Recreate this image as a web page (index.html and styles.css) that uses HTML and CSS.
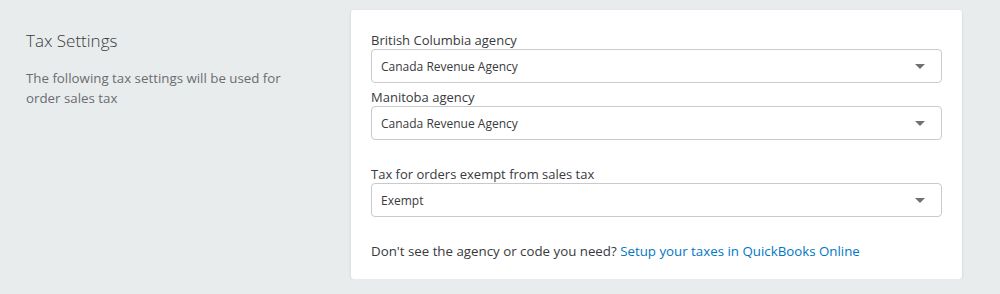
FILE: index.html
```html
<!DOCTYPE html>
<html lang="en">
<head>
<meta charset="utf-8">
<title>Tax Settings</title>
<link rel="stylesheet" href="styles.css">
</head>
<body>
<main class="page">
  <section class="intro">
    <h2 class="intro-title">Tax Settings</h2>
    <p class="intro-desc">The following tax settings will be used for order sales tax</p>
  </section>
  <section class="card">
    <div class="field">
      <label class="field-label">British Columbia agency</label>
      <div class="select"><span class="select-value">Canada Revenue Agency</span><span class="caret"></span></div>
    </div>
    <div class="field">
      <label class="field-label">Manitoba agency</label>
      <div class="select"><span class="select-value">Canada Revenue Agency</span><span class="caret"></span></div>
    </div>
    <div class="field field-spaced">
      <label class="field-label">Tax for orders exempt from sales tax</label>
      <div class="select"><span class="select-value">Exempt</span><span class="caret"></span></div>
    </div>
    <p class="help">Don't see the agency or code you need? <a class="help-link" href="#">Setup your taxes in QuickBooks Online</a></p>
  </section>
</main>
</body>
</html>
```

FILE: styles.css
```css
html, body {
  margin: 0;
  padding: 0;
  background: #e9eced;
}
body {
  font-family: "Open Sans", "Noto Sans", sans-serif;
  color: #393a3d;
}
.page {
  display: flex;
  align-items: flex-start;
  padding: 10px 0 0 26px;
}
.intro {
  width: 275px;
  flex: none;
  padding-top: 20px;
}
.intro-title {
  margin: 0;
  font-size: 17px;
  font-weight: 300;
  line-height: 22px;
  color: #393a3d;
}
.intro-desc {
  margin: 16px 0 0;
  font-size: 13.3px;
  line-height: 20px;
  color: #6b6c72;
  width: 270px;
}
.card {
  margin-left: 50px;
  width: 611px;
  box-sizing: border-box;
  background: #fff;
  border-radius: 3px;
  box-shadow: 0 1px 3px rgba(0,0,0,0.12);
  padding: 21px 20px 19px 20px;
}
.field {
  display: flex;
  flex-direction: column;
}
.field + .field {
  margin-top: 5px;
}
.field-spaced {
  margin-top: 25px !important;
}
.field-label {
  font-size: 13px;
  line-height: 18px;
  color: #393a3d;
}
.select {
  height: 34px;
  box-sizing: border-box;
  border: 1px solid #c9cacc;
  border-radius: 4px;
  display: flex;
  align-items: center;
  justify-content: space-between;
  padding: 0 16px 0 9px;
}
.select-value {
  font-size: 12px;
  color: #393a3d;
}
.caret {
  width: 0;
  height: 0;
  border-left: 5px solid transparent;
  border-right: 5px solid transparent;
  border-top: 5px solid #707175;
}
.help {
  margin: 25px 0 0;
  font-size: 13.3px;
  line-height: 18px;
  color: #393a3d;
}
.help-link {
  color: #0077c5;
  text-decoration: none;
}
```
